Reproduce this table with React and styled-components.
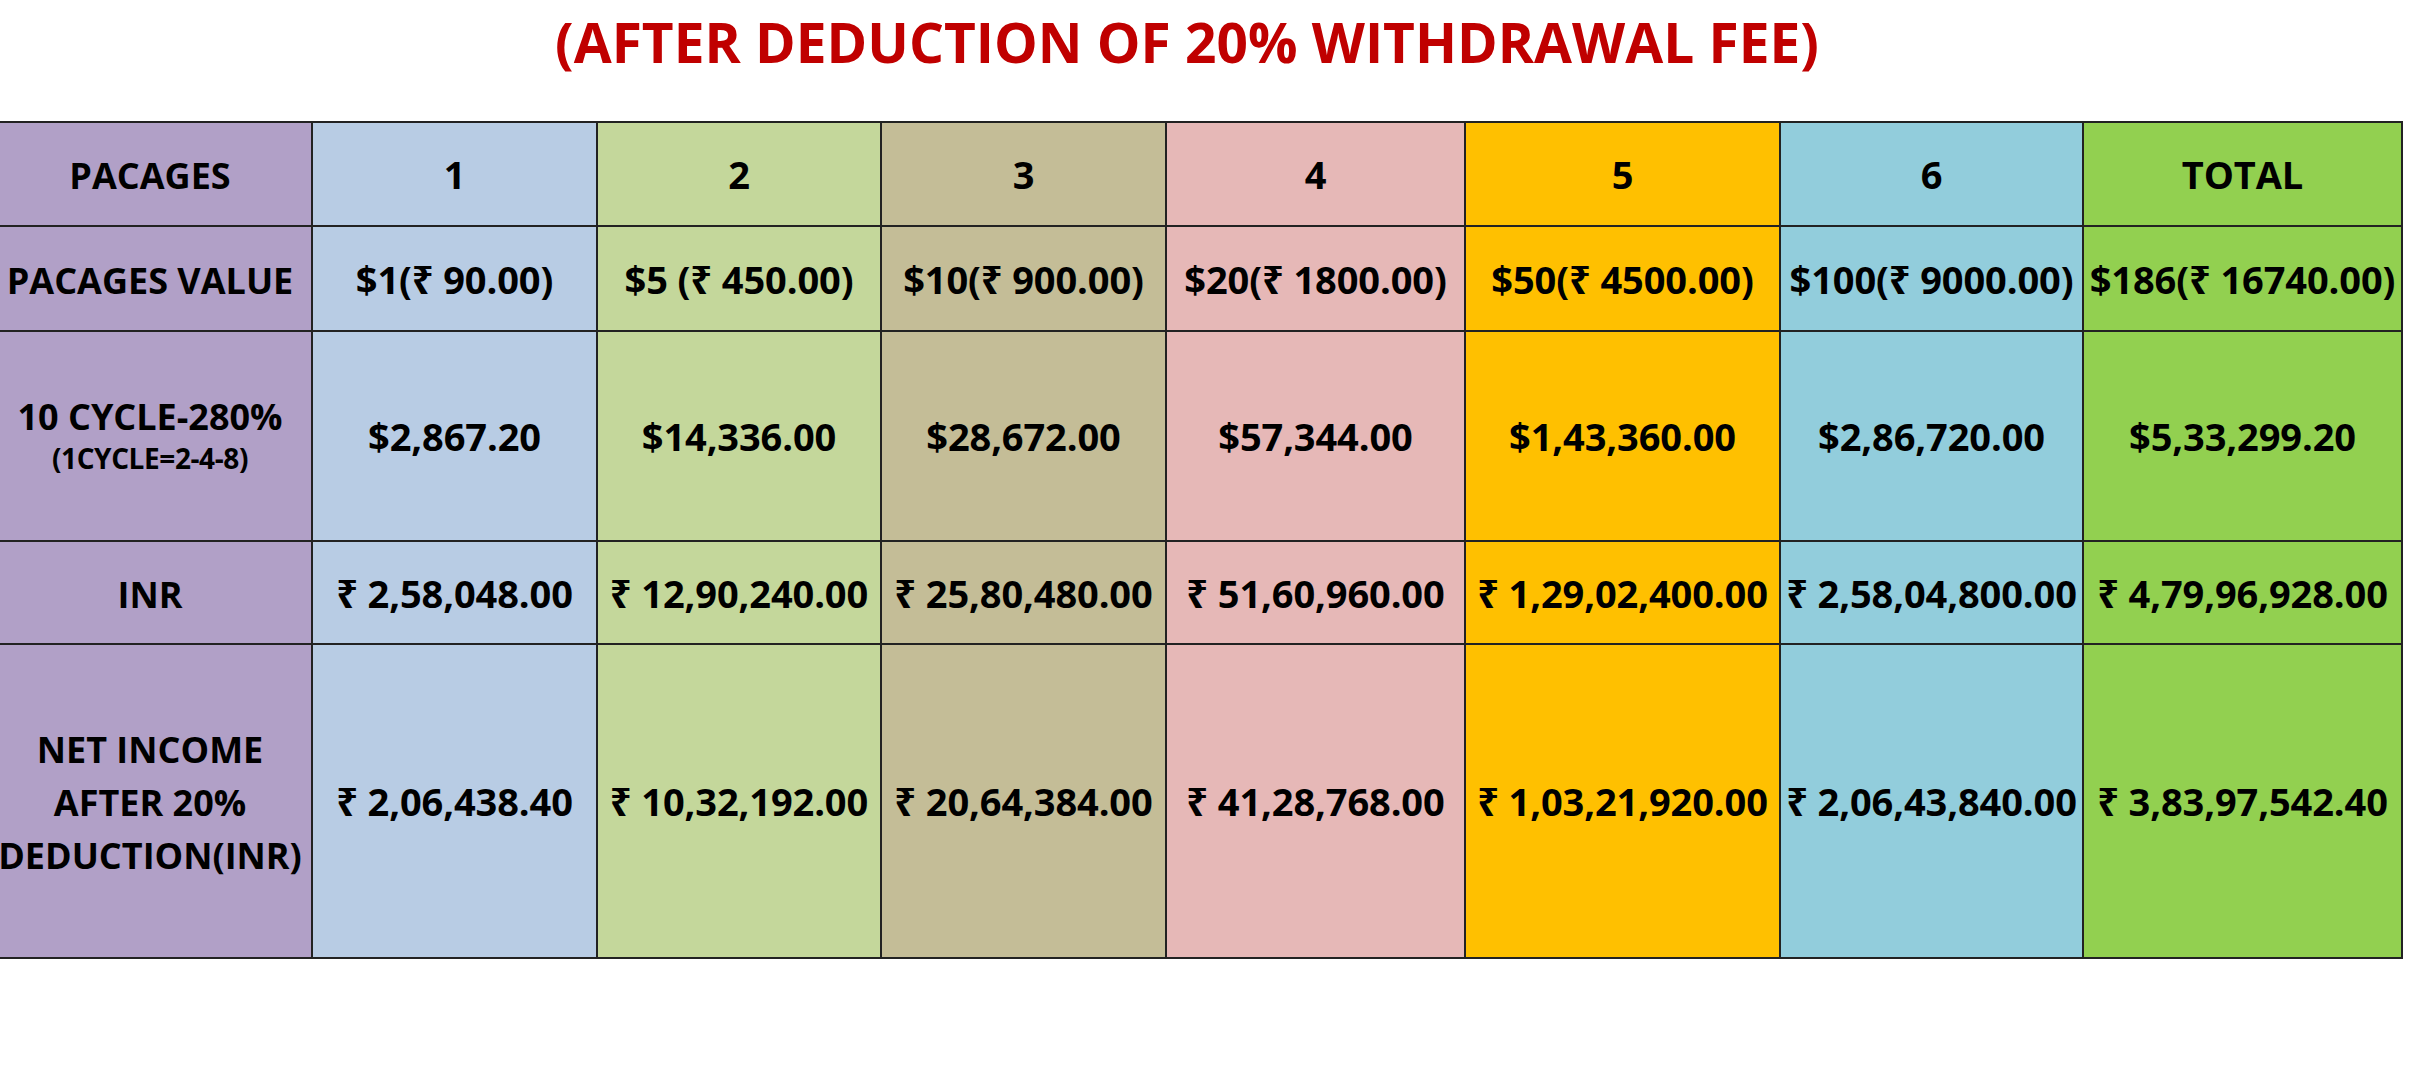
import React from 'react';
import styled, { createGlobalStyle } from 'styled-components';

const GlobalStyle = createGlobalStyle`
    html, body {
        margin: 0;
        padding: 0;
        background: #ffffff;
    }
    body {
        font-family: 'Open Sans', 'Noto Sans', 'DejaVu Sans', sans-serif;
        overflow: hidden;
    }
`;

const COLORS = [
    '#B1A0C7',
    '#B8CCE4',
    '#C4D79B',
    '#C4BD97',
    '#E6B8B7',
    '#FFC000',
    '#92CDDC',
    '#92D050',
];

const ROWS = [
    {
        height: 104,
        label: ['PACAGES'],
        values: ['1', '2', '3', '4', '5', '6', 'TOTAL'],
    },
    {
        height: 105,
        label: ['PACAGES VALUE'],
        values: [
            '$1(₹ 90.00)',
            '$5 (₹ 450.00)',
            '$10(₹ 900.00)',
            '$20(₹ 1800.00)',
            '$50(₹ 4500.00)',
            '$100(₹ 9000.00)',
            '$186(₹ 16740.00)',
        ],
    },
    {
        height: 210,
        label: ['10 CYCLE-280%'],
        note: '(1CYCLE=2-4-8)',
        values: [
            '$2,867.20',
            '$14,336.00',
            '$28,672.00',
            '$57,344.00',
            '$1,43,360.00',
            '$2,86,720.00',
            '$5,33,299.20',
        ],
    },
    {
        height: 103,
        label: ['INR'],
        values: [
            '₹ 2,58,048.00',
            '₹ 12,90,240.00',
            '₹ 25,80,480.00',
            '₹ 51,60,960.00',
            '₹ 1,29,02,400.00',
            '₹ 2,58,04,800.00',
            '₹ 4,79,96,928.00',
        ],
    },
    {
        height: 314,
        label: ['NET INCOME', 'AFTER 20%', 'DEDUCTION(INR)'],
        values: [
            '₹ 2,06,438.40',
            '₹ 10,32,192.00',
            '₹ 20,64,384.00',
            '₹ 41,28,768.00',
            '₹ 1,03,21,920.00',
            '₹ 2,06,43,840.00',
            '₹ 3,83,97,542.40',
        ],
    },
];

const Page = styled.div`
    width: 2422px;
    height: 1080px;
    overflow: hidden;
    background: #ffffff;
`;

const Title = styled.h1`
    margin: 0;
    padding-right: 48px;
    height: 84px;
    line-height: 84px;
    text-align: center;
    font-size: 55px;
    font-weight: 700;
    color: #c00000;
    white-space: nowrap;
`;

const Table = styled.div`
    display: grid;
    grid-template-columns: 324px 285px 284px 285px 299px 315px 303px 319px;
    grid-template-rows: ${(p) => p.$rows};
    width: max-content;
    margin-top: 37px;
    margin-left: -11px;
    border-top: 2px solid #222222;
`;

const Cell = styled.div`
    box-sizing: border-box;
    display: flex;
    flex-direction: column;
    align-items: center;
    justify-content: center;
    padding-top: ${(p) => (p.$label ? '3px' : '0')};
    background: ${(p) => p.$bg};
    border-right: 2px solid #222222;
    border-bottom: 2px solid #222222;
    color: #000000;
    font-size: ${(p) => (p.$label ? '36px' : '38px')};
    font-weight: 700;
    letter-spacing: ${(p) => (p.$label ? '0' : '-0.1px')};
    white-space: nowrap;
    overflow: visible;
`;

const LabelLine = styled.span`
    display: block;
    line-height: ${(p) => (p.$tight ? '40px' : '53px')};
`;

const Note = styled.span`
    display: block;
    font-size: 28px;
    line-height: 42px;
    letter-spacing: -0.4px;
`;

const App = () => {
    const rowTemplate = ROWS.map((r) => `${r.height}px`).join(' ');

    return (
        <Page>
            <GlobalStyle />
            <Title>(AFTER DEDUCTION OF 20% WITHDRAWAL FEE)</Title>
            <Table $rows={rowTemplate}>
                {ROWS.map((row, ri) => (
                    <React.Fragment key={ri}>
                        <Cell $bg={COLORS[0]} $label>
                            {row.label.map((line) => (
                                <LabelLine key={line} $tight={!!row.note}>
                                    {line}
                                </LabelLine>
                            ))}
                            {row.note && <Note>{row.note}</Note>}
                        </Cell>
                        {row.values.map((value, ci) => (
                            <Cell key={ci} $bg={COLORS[ci + 1]}>
                                {value}
                            </Cell>
                        ))}
                    </React.Fragment>
                ))}
            </Table>
        </Page>
    );
};

export default App;
